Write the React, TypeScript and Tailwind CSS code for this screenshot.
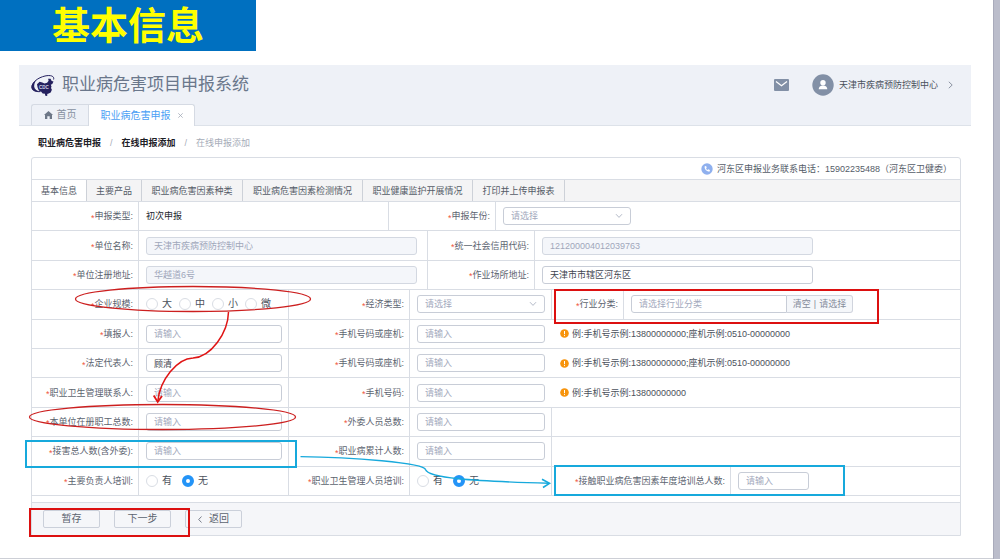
import type { ReactNode } from "react";

const LINE = "border-[#d9dde4]";

function Row({ children }: { children: ReactNode }) {
  return <div className={`flex items-stretch border-b ${LINE}`}>{children}</div>;
}

function LabelCell({ id, width, children }: { id?: string; width: string; children: ReactNode }) {
  return (
    <div className={`flex shrink-0 items-center justify-end border-r pr-[5px] text-[#5c6470] ${LINE} ${width}`}>
      <label htmlFor={id} className="flex items-center whitespace-nowrap">
        <span className="pt-[3px] text-[#f0563f]">*</span>
        <span>{children}:</span>
      </label>
    </div>
  );
}

function ValueCell({ width = "flex-1", line = false, children }: { width?: string; line?: boolean; children?: ReactNode }) {
  return (
    <div className={`flex items-center pl-[7px] ${width} ${line ? `border-r ${LINE}` : ""}`}>{children}</div>
  );
}

function Field({ id, width, value, disabled }: { id: string; width: string; value?: string; disabled?: boolean }) {
  return (
    <input
      id={id}
      type="text"
      defaultValue={value}
      disabled={disabled}
      placeholder="请输入"
      className={`h-[18px] rounded-[3px] border border-[#c8cdd7] bg-white px-[7px] leading-[16px] text-[#3f4550] placeholder:text-[#a3a9bd] disabled:border-[#d3d8e1] disabled:bg-[#f4f6fa] disabled:text-[#a0a7ba] ${width}`}
    />
  );
}

function Dropdown({ id }: { id: string }) {
  return (
    <div className="relative w-[128px]">
      <select
        id={id}
        defaultValue=""
        className="block h-[18px] w-full appearance-none rounded-[3px] border border-[#c8cdd7] bg-white px-[7px] leading-[16px] text-[#a3a9bd]"
      >
        <option value="">请选择</option>
      </select>
      <svg className="pointer-events-none absolute top-[6px] right-[8px] h-[6px] w-[8px]" viewBox="0 0 8 6" fill="none" stroke="#b4bac8">
        <path d="M1 1.2 4 4.4 7 1.2" />
      </svg>
    </div>
  );
}

function Radios({ name, options, checked, gap }: { name: string; options: string[]; checked?: string; gap: string }) {
  return (
    <div className={`flex text-[10px] text-[#4b515c] ${gap}`}>
      {options.map((o) => (
        <label key={o} className="flex items-center gap-[4px]">
          <input
            type="radio"
            name={name}
            defaultChecked={o === checked}
            className="h-[12px] w-[12px] appearance-none rounded-full border border-[#d9dde4] bg-white checked:border-[4px] checked:border-[#2494f7]"
          />
          {o}
        </label>
      ))}
    </div>
  );
}

function Hint({ children }: { children: ReactNode }) {
  return (
    <div className="flex flex-1 items-center gap-[3px] pl-[8px] text-[#4b515c]">
      <svg className="h-[9px] w-[9px]" viewBox="0 0 9 9">
        <circle cx="4.5" cy="4.5" r="4.3" fill="#f7940d" />
        <path d="M4.5 2v3.2M4.5 6.1v1" stroke="#fff" strokeWidth="1" />
      </svg>
      <span>{children}</span>
    </div>
  );
}

function Logo() {
  return (
    <svg className="h-[22px] w-[24px]" viewBox="0 0 24 22">
      <path d="M22.600 5.500C23.600 2 19.500.8 14 2 7 3.600 1 8.300.9 12.800.9 16.200 4 18 9.500 17.600" fill="none" stroke="#25215f" strokeWidth="1" />
      <path d="M5.500 6C2 8.500.3 11 .5 13.300.8 16.600 4.300 18.400 9.500 17.700 6 17 3.500 15.500 3.200 12.800 3 10.500 3.800 8 5.500 6z" fill="#25215f" />
      <path d="M6 10.200 8.600 7.800l2.700.6 2.200 1 2.600-.7 1.500-1.900-.5-2 2.400-.1 1.200 2.300 1.800.4-1.200 2.600-1.500.8.7 1.600-.5 1.700.9 1.600-1.200 2.700-2 1.100-1.500.5.2 1.400-1.300.8-1-1-.1-1.400-2.300-.4-1.700-1.800-2.200-1-1.200-3.200z" fill="#25215f" />
      <text x="8" y="14.700" fontSize="4.500" fontWeight="bold" fill="#d4d7e8" fontFamily="Liberation Sans, sans-serif">CDC</text>
    </svg>
  );
}

function Header() {
  return (
    <header className="border-b border-[#dde2e9] bg-[#eef1f7]">
      <div className="flex h-[39px] items-center pr-[18px] pl-[12px]">
        <Logo />
        <h1 className="ml-[7px] text-[17px] leading-[22px] font-normal text-[#6a778b]">职业病危害项目申报系统</h1>
        <button type="button" aria-label="消息" className="ml-auto">
          <svg className="h-[12px] w-[15px]" viewBox="0 0 15 12">
            <rect width="15" height="12" rx="1" fill="#8290a6" />
            <path d="M2 2.600 7.500 6.800 13 2.600" fill="none" stroke="#fff" strokeWidth="1.300" />
          </svg>
        </button>
        <button type="button" className="ml-[23px] flex items-center gap-[5px] text-[#4a505b]">
          <svg className="h-[22px] w-[22px]" viewBox="0 0 22 22">
            <circle cx="11" cy="11" r="10.700" fill="#8290a6" />
            <circle cx="11" cy="8.800" r="2.700" fill="#fff" />
            <path d="M6.700 15.300c0-2.600 1.600-3.900 4.300-3.900s4.300 1.300 4.300 3.900z" fill="#fff" />
          </svg>
          <span>天津市疾病预防控制中心</span>
          <svg className="ml-[5px] h-[8px] w-[5px]" viewBox="0 0 5 8" fill="none" stroke="#8c94a3">
            <path d="M.8.8 4.200 4 .8 7.200" />
          </svg>
        </button>
      </div>
      <nav className="flex h-[21px] pl-[12px] text-[10px]">
        <a href="#home" className="flex w-[57px] items-center justify-center gap-[4px] rounded-tl-[3px] border-t border-l border-[#d5dae3] text-[#8690a0]">
          <svg className="h-[8px] w-[9px]" viewBox="0 0 9 8" fill="#6d7787">
            <path d="M4.500 0 9 3.900H8V8H5.700V5.200H3.300V8H1V3.900H0z" />
          </svg>
          首页
        </a>
        <a href="#report" className="-mb-px flex w-[107px] items-center justify-center gap-[7px] rounded-tr-[3px] border-x border-t border-[#d5dae3] bg-white text-[#4ba0f5]">
          职业病危害申报
          <svg className="h-[5px] w-[5px]" viewBox="0 0 5 5" stroke="#a3abb8" strokeWidth=".8">
            <path d="M.3.3 4.700 4.700M4.700.3.3 4.700" />
          </svg>
        </a>
      </nav>
    </header>
  );
}

const SECTIONS = [
  { name: "基本信息", width: "w-[55px]" },
  { name: "主要产品", width: "w-[55px]" },
  { name: "职业病危害因素种类", width: "w-[101px]" },
  { name: "职业病危害因素检测情况", width: "w-[120px]" },
  { name: "职业健康监护开展情况", width: "w-[110px]" },
  { name: "打印并上传申报表", width: "w-[92px]" },
];

function ReportForm() {
  return (
    <div className="grid min-h-[294px] auto-rows-fr">
      <Row>
        <LabelCell width="w-[107px]">申报类型</LabelCell>
        <ValueCell width="w-[250px]" line><span className="text-[#22262d]">初次申报</span></ValueCell>
        <LabelCell id="year" width="w-[107px]">申报年份</LabelCell>
        <ValueCell><Dropdown id="year" /></ValueCell>
      </Row>
      <Row>
        <LabelCell id="unit" width="w-[107px]">单位名称</LabelCell>
        <ValueCell width="w-[289px]" line><Field id="unit" width="w-[271px]" value="天津市疾病预防控制中心" disabled /></ValueCell>
        <LabelCell id="code" width="w-[107px]">统一社会信用代码</LabelCell>
        <ValueCell><Field id="code" width="w-[271px]" value="121200004012039763" disabled /></ValueCell>
      </Row>
      <Row>
        <LabelCell id="regaddr" width="w-[107px]">单位注册地址</LabelCell>
        <ValueCell width="w-[289px]" line><Field id="regaddr" width="w-[271px]" value="华越道6号" disabled /></ValueCell>
        <LabelCell id="workaddr" width="w-[107px]">作业场所地址</LabelCell>
        <ValueCell><Field id="workaddr" width="w-[271px]" value="天津市市辖区河东区" /></ValueCell>
      </Row>
      <Row>
        <LabelCell width="w-[107px]">企业规模</LabelCell>
        <ValueCell width="w-[150px]" line><Radios name="size" options={["大", "中", "小", "微"]} gap="gap-[7px]" /></ValueCell>
        <LabelCell id="economy" width="w-[121px]">经济类型</LabelCell>
        <ValueCell width="w-[142px]" line><Dropdown id="economy" /></ValueCell>
        <LabelCell id="industry" width="w-[72px]">行业分类</LabelCell>
        <ValueCell>
          <input
            id="industry"
            type="text"
            placeholder="请选择行业分类"
            className="h-[18px] w-[156px] rounded-l-[3px] border border-[#c8cdd7] bg-white px-[7px] leading-[16px] placeholder:text-[#a3a9bd]"
          />
          <div className="flex h-[18px] w-[66px] items-center justify-center gap-[3px] rounded-r-[3px] border border-l-0 border-[#d0d4dd] bg-[#f5f7fa] text-[#858c9b]">
            <button type="button">清空</button>|<button type="button">请选择</button>
          </div>
        </ValueCell>
      </Row>
      <Row>
        <LabelCell id="filler" width="w-[107px]">填报人</LabelCell>
        <ValueCell width="w-[150px]" line><Field id="filler" width="w-[136px]" /></ValueCell>
        <LabelCell id="phone1" width="w-[121px]">手机号码或座机</LabelCell>
        <ValueCell width="w-[142px]"><Field id="phone1" width="w-[128px]" /></ValueCell>
        <Hint>例:手机号示例:13800000000;座机示例:0510-00000000</Hint>
      </Row>
      <Row>
        <LabelCell id="legal" width="w-[107px]">法定代表人</LabelCell>
        <ValueCell width="w-[150px]" line><Field id="legal" width="w-[136px]" value="顾清" /></ValueCell>
        <LabelCell id="phone2" width="w-[121px]">手机号码或座机</LabelCell>
        <ValueCell width="w-[142px]"><Field id="phone2" width="w-[128px]" /></ValueCell>
        <Hint>例:手机号示例:13800000000;座机示例:0510-00000000</Hint>
      </Row>
      <Row>
        <LabelCell id="contact" width="w-[107px]">职业卫生管理联系人</LabelCell>
        <ValueCell width="w-[150px]" line><Field id="contact" width="w-[136px]" /></ValueCell>
        <LabelCell id="phone3" width="w-[121px]">手机号码</LabelCell>
        <ValueCell width="w-[142px]"><Field id="phone3" width="w-[128px]" /></ValueCell>
        <Hint>例:手机号示例:13800000000</Hint>
      </Row>
      <Row>
        <LabelCell id="staff" width="w-[107px]">本单位在册职工总数</LabelCell>
        <ValueCell width="w-[150px]" line><Field id="staff" width="w-[136px]" /></ValueCell>
        <LabelCell id="outside" width="w-[121px]">外委人员总数</LabelCell>
        <ValueCell width="w-[142px]" line><Field id="outside" width="w-[128px]" /></ValueCell>
      </Row>
      <Row>
        <LabelCell id="exposed" width="w-[107px]">接害总人数(含外委)</LabelCell>
        <ValueCell width="w-[150px]" line><Field id="exposed" width="w-[136px]" /></ValueCell>
        <LabelCell id="cases" width="w-[121px]">职业病累计人数</LabelCell>
        <ValueCell width="w-[142px]" line><Field id="cases" width="w-[128px]" /></ValueCell>
      </Row>
      <Row>
        <LabelCell width="w-[107px]">主要负责人培训</LabelCell>
        <ValueCell width="w-[150px]" line><Radios name="leader" options={["有", "无"]} checked="无" gap="gap-[10px]" /></ValueCell>
        <LabelCell width="w-[121px]">职业卫生管理人员培训</LabelCell>
        <ValueCell width="w-[142px]" line><Radios name="manager" options={["有", "无"]} checked="无" gap="gap-[10px]" /></ValueCell>
        <LabelCell id="trained" width="w-[179px]">接触职业病危害因素年度培训总人数</LabelCell>
        <ValueCell><Field id="trained" width="w-[71px]" /></ValueCell>
      </Row>
    </div>
  );
}

function Annotations() {
  return (
    <svg className="pointer-events-none absolute top-0 left-0 h-[559px] w-[1000px]" viewBox="0 0 1000 559" fill="none" aria-hidden="true">
      <g stroke="#cc1f1f" strokeWidth="1.300">
        <ellipse cx="193" cy="299" rx="117.500" ry="12.500" />
        <ellipse cx="162.500" cy="417" rx="133" ry="12.500" />
      </g>
      <g stroke="#dc1010" strokeWidth="2">
        <rect x="555" y="290" width="323" height="33" />
        <rect x="30" y="509" width="159" height="27" />
      </g>
      <g stroke="#e01515" strokeWidth="1.500">
        <path d="M228.500 312C228 333 211 357 193 358 177 358.500 160 380 157.800 401" />
        <path d="M153.700 395.500 157.700 402 162 396" strokeWidth="1.800" />
      </g>
      <g stroke="#17a9dc" strokeWidth="2">
        <rect x="26" y="441" width="270" height="26" />
        <rect x="555" y="466" width="289" height="29" />
      </g>
      <g stroke="#17a9dc" strokeWidth="1.400">
        <path d="M300.500 456.600C352 457 424 463 425.500 469.500 428 478 470 481 549 483.300" />
        <path d="M542 479.300 549.500 483.300 543 487.500" strokeWidth="1.600" />
      </g>
    </svg>
  );
}

export default function App() {
  return (
    <div className="relative flex min-h-screen bg-white font-['Liberation_Sans','Noto_Sans_CJK_SC',sans-serif] text-[9px] leading-[12px]">
      <div className="min-w-0 flex-1 border-b border-[#cdcfd6]">
        <div className="flex h-[51px] w-[256px] items-center justify-center bg-[#0070c0]">
          <h2 className="text-[38px] leading-[52px] font-bold text-[#ffff00]">基本信息</h2>
        </div>
        <main className="mt-[14px] mr-[22px] ml-[19px]">
          <Header />
          <nav className="flex h-[31px] items-center gap-[9px] pt-[2px] pl-[19px] text-[#a6acb8]">
            <a href="#report" className="font-bold text-[#1d2026]">职业病危害申报</a>
            <span>/</span>
            <a href="#online" className="font-bold text-[#1d2026]">在线申报添加</a>
            <span>/</span>
            <span>在线申报添加</span>
          </nav>
          <section className={`mr-[10px] ml-[12px] rounded-t-[3px] border ${LINE}`}>
            <div className={`flex h-[22px] items-center justify-end gap-[4px] border-b pr-[8px] text-[#555c68] ${LINE}`}>
              <svg className="h-[12px] w-[12px]" viewBox="0 0 12 12">
                <circle cx="6" cy="6" r="5.700" fill="#8fb0ee" />
                <path d="M3.700 3.200c-.6 2.800 2.100 5.700 5 5.300l.2-1.500-1.700-.7-.7.600C5.600 6.500 5.300 6 5.100 5.400l.6-.6-.6-1.700z" fill="#fff" />
              </svg>
              河东区申报业务联系电话：15902235488（河东区卫健委）
            </div>
            <div className={`flex h-[22px] border-b bg-[#f4f4f5] ${LINE}`}>
              {SECTIONS.map((s, i) => (
                <button
                  key={s.name}
                  type="button"
                  className={`border-r border-[#cdd1d8] text-center whitespace-nowrap text-[#555c68] ${s.width} ${i === 0 ? "bg-white" : ""}`}
                >
                  {s.name}
                </button>
              ))}
            </div>
            <ReportForm />
            <div className={`mt-[6px] flex h-[33px] items-center gap-[14px] border-t bg-[#f5f6f9] pl-[11px] text-[10px] text-[#5c6470] ${LINE}`}>
              <button type="button" className="h-[18px] w-[57px] rounded-[2px] border border-[#cbd0da]">暂存</button>
              <button type="button" className="h-[18px] w-[57px] rounded-[2px] border border-[#cbd0da]">下一步</button>
              <button type="button" className="flex h-[18px] w-[57px] items-center justify-center gap-[7px] rounded-[2px] border border-[#cbd0da]">
                <svg className="h-[7px] w-[4px]" viewBox="0 0 4 7" fill="none" stroke="#6b7280" strokeWidth=".9">
                  <path d="M3.500.5.700 3.500 3.500 6.500" />
                </svg>
                返回
              </button>
            </div>
          </section>
        </main>
      </div>
      <div className="w-[7px] border-l border-[#a9abbb] bg-[#bbbdcb]" />
      <Annotations />
    </div>
  );
}
